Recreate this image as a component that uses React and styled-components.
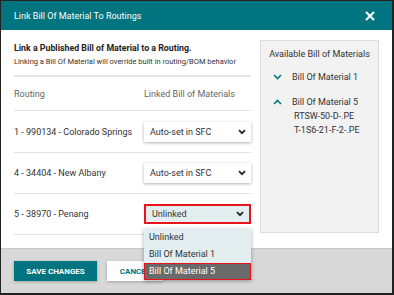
import styled, { createGlobalStyle } from 'styled-components';

const Global = createGlobalStyle`
  html, body { margin: 0; padding: 0; background: #fff; }
  body { font-family: Roboto, 'Liberation Sans', sans-serif; }
`

const Modal = styled.div`
  width: 394px;
  height: 295px;
  box-sizing: border-box;
  border-left: 1px solid #222;
  border-top: 1px solid #222;
  border-right: 2px solid #222;
  border-bottom: 2px solid #222;
  display: flex;
  flex-direction: column;
  overflow: hidden;
`

const Header = styled.div`
  height: 29px;
  background: #00747f;
  color: #fff;
  display: flex;
  align-items: center;
  justify-content: space-between;
  padding: 0 17px 0 13px;
  font-size: 9px;
  flex-shrink: 0;
`

const Body = styled.div`
  display: flex;
  padding: 10px 13px 0 13px;
  gap: 9px;
  height: 218px;
  flex-shrink: 0;
  box-sizing: border-box;
`

const Left = styled.div`
  width: 237px;
  display: flex;
  flex-direction: column;
`

const Heading = styled.div`
  font-size: 8.8px;
  font-weight: 700;
  color: #222;
  margin-top: 3px;
`

const Sub = styled.div`
  font-size: 7.5px;
  color: #333;
  margin-top: 4px;
  padding-bottom: 9px;
  border-bottom: 2px solid #e6e6e6;
`

const Row = styled.div`
  display: flex;
  align-items: center;
  height: ${p => p.$h}px;
  border-bottom: 1px solid #e3e3e3;
  font-size: 9px;
  color: ${p => (p.$head ? '#666' : '#333')};
  position: relative;
`

const Cell = styled.div`
  width: 130px;
  flex-shrink: 0;
`

const Select = styled.div`
  width: 107px;
  height: 20px;
  box-sizing: border-box;
  display: flex;
  align-items: center;
  justify-content: space-between;
  padding: 0 5px 0 6px;
  font-size: 9px;
  color: #333;
  background: ${p => (p.$open ? '#e2eeef' : '#fff')};
  border: ${p => (p.$open ? '2px solid #e8141b' : 'none')};
  box-shadow: ${p => (p.$open ? 'none' : '0 1px 3px rgba(0,0,0,0.3)')};
`

const Menu = styled.div`
  position: absolute;
  left: 130px;
  top: 35px;
  width: 107px;
  background: #e2eeef;
  box-shadow: 0 1px 4px rgba(0,0,0,0.35);
  z-index: 5;
`

const Option = styled.div`
  height: 17px;
  line-height: 15px;
  box-sizing: border-box;
  padding: 0 4px;
  font-size: 9px;
  color: ${p => (p.$active ? '#fff' : '#333')};
  background: ${p => (p.$active ? '#6a6a6a' : 'transparent')};
  border: ${p => (p.$active ? '1px solid #e8141b' : '1px solid transparent')};
`

const Panel = styled.div`
  width: 121px;
  height: 193px;
  box-sizing: border-box;
  background: #f2f2f2;
  border: 1px solid #ddd;
  padding: 8px 0 0 0;
  font-size: 9px;
  color: #333;
`

const PanelTitle = styled.div`
  text-align: center;
  margin-bottom: 13px;
`

const Item = styled.div`
  display: flex;
  align-items: center;
  padding-left: 12px;
  margin-bottom: ${p => p.$mb}px;
  gap: 10px;
`

const SubItem = styled.div`
  padding-left: 33px;
  margin-bottom: 4px;
`

const Footer = styled.div`
  flex: 1;
  background: #d8d8d8;
  border-top: 1px solid #c9c9c9;
  display: flex;
  align-items: flex-start;
  padding: 12px 13px 0 13px;
  gap: 10px;
`

const Button = styled.div`
  height: 20px;
  box-sizing: border-box;
  display: flex;
  align-items: center;
  justify-content: center;
  font-size: 8px;
  font-weight: 700;
  width: ${p => p.$w}px;
  background: ${p => (p.$primary ? '#00747f' : '#fff')};
  color: ${p => (p.$primary ? '#fff' : '#00747f')};
  box-shadow: 0 1px 3px rgba(0,0,0,0.25);
`

const CloseIcon = () => (
  <svg width="10" height="10" viewBox="0 0 10 10">
    <path d="M1 1 L9 9 M9 1 L1 9" stroke="#fff" strokeWidth="2" />
  </svg>
)

const Chevron = ({ up }) => (
  <svg width="9" height="6" viewBox="0 0 9 6">
    <path
      d={up ? 'M1 5 L4.5 1.5 L8 5' : 'M1 1 L4.5 4.5 L8 1'}
      fill="none"
      stroke="#00747f"
      strokeWidth="1.6"
    />
  </svg>
)

const Caret = () => (
  <svg width="8" height="6" viewBox="0 0 8 6">
    <path d="M1 1.2 L4 4.2 L7 1.2" fill="none" stroke="#222" strokeWidth="1.7" />
  </svg>
)

export default function App() {
  return (
    <>
      <Global />
      <Modal>
        <Header>
          <span>Link Bill Of Material To Routings</span>
          <CloseIcon />
        </Header>
        <Body>
          <Left>
            <Heading>Link a Published Bill of Material to a Routing.</Heading>
            <Sub>Linking a Bill Of Material will override built in routing/BOM behavior</Sub>
            <Row $h={33} $head>
              <Cell>Routing</Cell>
              <span>Linked Bill of Materials</span>
            </Row>
            <Row $h={41}>
              <Cell>1 - 990134 - Colorado Springs</Cell>
              <Select>Auto-set in SFC<Caret /></Select>
            </Row>
            <Row $h={40}>
              <Cell>4 - 34404 - New Albany</Cell>
              <Select>Auto-set in SFC<Caret /></Select>
            </Row>
            <Row $h={40}>
              <Cell>5 - 38970 - Penang</Cell>
              <Select $open>Unlinked<Caret /></Select>
              <Menu>
                <Option>Unlinked</Option>
                <Option>Bill Of Material 1</Option>
                <Option $active>Bill Of Material 5</Option>
              </Menu>
            </Row>
          </Left>
          <Panel>
            <PanelTitle>Available Bill of Materials</PanelTitle>
            <Item $mb={15}><Chevron />Bill Of Material 1</Item>
            <Item $mb={4}><Chevron up />Bill Of Material 5</Item>
            <SubItem>RTSW-50-D-.PE</SubItem>
            <SubItem>T-1S6-21-F-2-.PE</SubItem>
          </Panel>
        </Body>
        <Footer>
          <Button $primary $w={83}>SAVE CHANGES</Button>
          <Button $w={56}>CANCEL</Button>
        </Footer>
      </Modal>
    </>
  )
}
